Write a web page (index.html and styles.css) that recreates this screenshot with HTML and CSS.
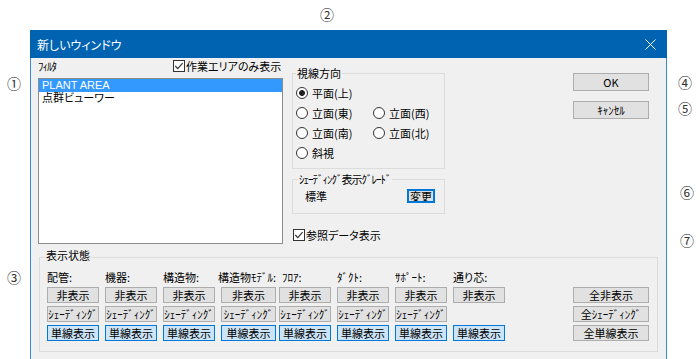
FILE: index.html
```html
<!DOCTYPE html>
<html lang="ja">
<head>
    <meta charset="UTF-8">
    <title>新しいウィンドウ</title>
    <link rel="stylesheet" href="styles.css">
</head>
<body>
<div class="page">
    <div class="dialog">
        <div class="titlebar">
            <span class="title">新しいウィンドウ</span>
            <svg class="close" width="11" height="11" viewBox="0 0 11 11"><path d="M0.5 0.5 L10.5 10.5 M10.5 0.5 L0.5 10.5" stroke="#fff" stroke-width="1" fill="none"/></svg>
        </div>
        <div class="body">
            <div class="top">
                <div class="filter">
                    <div class="filter-head">
                        <span class="filter-label">ﾌｨﾙﾀ</span>
                        <label class="check">
                            <svg class="box" width="12" height="12" viewBox="0 0 12 12"><rect x="0.5" y="0.5" width="11" height="11" fill="#fff" stroke="#333"/><path d="M2.3 6 L4.8 8.6 L9.6 3.2" fill="none" stroke="#333" stroke-width="1.2"/></svg>
                            作業エリアのみ表示
                        </label>
                    </div>
                    <ul class="list">
                        <li class="selected">PLANT AREA</li>
                        <li>点群ビューワー</li>
                    </ul>
                </div>

                <div class="middle">
                    <fieldset class="group view">
                        <legend>視線方向</legend>
                        <div class="radios">
                            <label class="radio"><span class="dot on"></span>平面(上)</label>
                            <span></span>
                            <label class="radio"><span class="dot"></span>立面(東)</label>
                            <label class="radio"><span class="dot"></span>立面(西)</label>
                            <label class="radio"><span class="dot"></span>立面(南)</label>
                            <label class="radio"><span class="dot"></span>立面(北)</label>
                            <label class="radio"><span class="dot"></span>斜視</label>
                        </div>
                    </fieldset>

                    <fieldset class="group shading">
                        <legend>ｼｪｰﾃﾞｨﾝｸﾞ表示ｸﾞﾚｰﾄﾞ</legend>
                        <div class="shade-row">
                            <span>標準</span>
                            <button class="btn change">変更</button>
                        </div>
                    </fieldset>

                    <label class="check ref">
                        <svg class="box" width="12" height="12" viewBox="0 0 12 12"><rect x="0.5" y="0.5" width="11" height="11" fill="#fff" stroke="#333"/><path d="M2.3 6 L4.8 8.6 L9.6 3.2" fill="none" stroke="#333" stroke-width="1.2"/></svg>
                        参照データ表示
                    </label>
                </div>

                <div class="actions">
                    <button class="btn big">OK</button>
                    <button class="btn big">ｷｬﾝｾﾙ</button>
                </div>
            </div>

            <fieldset class="group state">
                <legend>表示状態</legend>
                <div class="state-cols">
                    <div class="cat">
                        <span class="cat-label">配管:</span>
                        <button class="btn">非表示</button>
                        <button class="btn">ｼｪｰﾃﾞｨﾝｸﾞ</button>
                        <button class="btn single">単線表示</button>
                    </div>
                    <div class="cat">
                        <span class="cat-label">機器:</span>
                        <button class="btn">非表示</button>
                        <button class="btn">ｼｪｰﾃﾞｨﾝｸﾞ</button>
                        <button class="btn single">単線表示</button>
                    </div>
                    <div class="cat">
                        <span class="cat-label">構造物:</span>
                        <button class="btn">非表示</button>
                        <button class="btn">ｼｪｰﾃﾞｨﾝｸﾞ</button>
                        <button class="btn single">単線表示</button>
                    </div>
                    <div class="cat">
                        <span class="cat-label wide">構造物ﾓﾃﾞﾙ:</span>
                        <button class="btn">非表示</button>
                        <button class="btn">ｼｪｰﾃﾞｨﾝｸﾞ</button>
                        <button class="btn single">単線表示</button>
                    </div>
                    <div class="cat">
                        <span class="cat-label nudge">ﾌﾛｱ:</span>
                        <button class="btn">非表示</button>
                        <button class="btn">ｼｪｰﾃﾞｨﾝｸﾞ</button>
                        <button class="btn single">単線表示</button>
                    </div>
                    <div class="cat">
                        <span class="cat-label">ﾀﾞｸﾄ:</span>
                        <button class="btn">非表示</button>
                        <button class="btn">ｼｪｰﾃﾞｨﾝｸﾞ</button>
                        <button class="btn single">単線表示</button>
                    </div>
                    <div class="cat">
                        <span class="cat-label">ｻﾎﾟｰﾄ:</span>
                        <button class="btn">非表示</button>
                        <button class="btn">ｼｪｰﾃﾞｨﾝｸﾞ</button>
                        <button class="btn single">単線表示</button>
                    </div>
                    <div class="cat">
                        <span class="cat-label">通り芯:</span>
                        <button class="btn">非表示</button>
                        <span></span>
                        <button class="btn single">単線表示</button>
                    </div>
                    <div class="cat all">
                        <span></span>
                        <button class="btn">全非表示</button>
                        <button class="btn">全ｼｪｰﾃﾞｨﾝｸﾞ</button>
                        <button class="btn">全単線表示</button>
                    </div>
                </div>
            </fieldset>
        </div>
    </div>

    <span class="mark" style="left:7px;top:76px">①</span>
    <span class="mark" style="left:320px;top:7px">②</span>
    <span class="mark" style="left:7px;top:270px">③</span>
    <span class="mark" style="left:678px;top:75px">④</span>
    <span class="mark" style="left:678px;top:101px">⑤</span>
    <span class="mark" style="left:680px;top:185px">⑥</span>
    <span class="mark" style="left:680px;top:233px">⑦</span>
</div>
</body>
</html>
```

FILE: styles.css
```css
body {
    margin: 0;
    background: #fff;
    font-family: "Noto Sans CJK JP", sans-serif;
    font-size: 11px;
    font-feature-settings: "palt";
    color: #000;
}
.page {
    position: relative;
    width: 700px;
    height: 359px;
    overflow: hidden;
    padding: 30px 0 0 30px;
    box-sizing: border-box;
}
.dialog {
    width: 637px;
}
.titlebar {
    height: 28px;
    background: #0063b1;
    display: flex;
    align-items: center;
    justify-content: space-between;
    padding: 0 11px 0 7px;
    color: #fff;
}
.title {
    font-size: 12px;
}
.body {
    background: #f0f0f0;
    border: 1px solid #3b8ad8;
    border-top: 0;
    padding: 0 8px 10px 7px;
}
.top {
    display: flex;
}
.filter {
    width: 245px;
    padding-top: 1px;
}
.filter-head {
    display: flex;
    align-items: center;
    height: 14px;
    margin-bottom: 5px;
}
.filter-label {
    width: 135px;
    letter-spacing: -1px;
}
.check {
    display: flex;
    align-items: center;
    gap: 1px;
    height: 14px;
    white-space: nowrap;
}
.box {
    display: block;
    flex: none;
}
.list {
    height: 166px;
    margin: 0;
    padding: 0;
    list-style: none;
    background: #fff;
    border: 1px solid #8c8c8c;
    box-sizing: border-box;
}
.list li {
    line-height: 13px;
    padding-left: 3px;
    font-family: "Liberation Sans", "Noto Sans CJK JP", sans-serif;
    font-size: 11px;
}
.list li.selected {
    background: #3399ff;
    color: #fff;
}
.middle {
    width: 153px;
    margin-left: 9px;
    padding-top: 8px;
}
.group {
    margin: 0;
    padding: 0;
    min-width: 0;
    border: 1px solid #dcdcdc;
}
.group legend {
    padding: 0 1px;
    line-height: 14px;
    white-space: nowrap;
}
.view legend {
    margin-left: 3px;
}
.radios {
    display: grid;
    grid-template-columns: 77px 1fr;
    grid-auto-rows: 20px;
    padding: 3px 0 5px 3px;
}
.radio {
    display: flex;
    align-items: center;
    gap: 4px;
}
.dot {
    width: 12px;
    height: 12px;
    border: 1px solid #333;
    border-radius: 50%;
    background: #fff;
    box-sizing: border-box;
}
.dot.on {
    background: radial-gradient(circle, #222 0 2.6px, #fff 3.2px);
}
.shading {
    margin-top: 3px;
}
.shading legend {
    margin-left: 5px;
    letter-spacing: -1px;
}
.shade-row {
    display: flex;
    align-items: center;
    justify-content: space-between;
    height: 16px;
    padding: 2px 9px 9px 12px;
}
.ref {
    margin: 14px 0 0 1px;
}
.actions {
    margin-left: auto;
    margin-right: 9px;
    width: 76px;
    padding-top: 15px;
    display: flex;
    flex-direction: column;
    gap: 10px;
}
.btn {
    height: 16px;
    padding: 0;
    margin: 0;
    font-family: inherit;
    font-size: 11px;
    font-feature-settings: "palt";
    line-height: 14px;
    color: #000;
    background: #e1e1e1;
    border: 1px solid #adadad;
    white-space: nowrap;
    overflow: hidden;
}
.btn.big {
    height: 18px;
    line-height: 16px;
}
.btn.single {
    background: #cce4f7;
    border-color: #0078d7;
}
.btn.change {
    width: 28px;
    height: 14px;
    line-height: 10px;
    border: 2px solid #0078d7;
    font-size: 11px;
}
.state {
    margin: 4px 0 0 1px;
}
.state legend {
    margin-left: 5px;
    padding-bottom: 4px;
}
.state-cols {
    display: flex;
    gap: 6px;
    padding: 4px 8px 10px 7px;
}
.cat {
    width: 52px;
    display: grid;
    grid-template-rows: 14px 16px 16px 16px;
    row-gap: 3px;
}
.cat.all {
    width: 76px;
    margin-left: auto;
}
.cat-label {
    line-height: 14px;
    white-space: nowrap;
}
.cat-label.wide {
    margin-left: -3px;
}
.cat-label.nudge {
    margin-left: 3px;
}
.mark {
    position: absolute;
    width: 14px;
    font-size: 14px;
    line-height: 14px;
    text-align: center;
    color: #333;
}
```
